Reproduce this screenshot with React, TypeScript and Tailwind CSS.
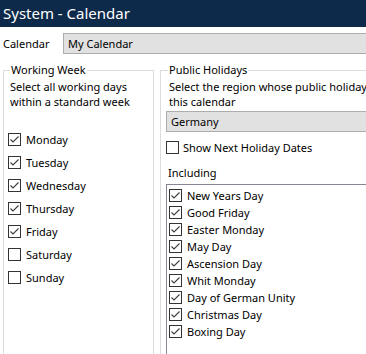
const weekDays = [
  { name: "Monday", checked: true },
  { name: "Tuesday", checked: true },
  { name: "Wednesday", checked: true },
  { name: "Thursday", checked: true },
  { name: "Friday", checked: true },
  { name: "Saturday", checked: false },
  { name: "Sunday", checked: false },
];

const holidays = [
  "New Years Day",
  "Good Friday",
  "Easter Monday",
  "May Day",
  "Ascension Day",
  "Whit Monday",
  "Day of German Unity",
  "Christmas Day",
  "Boxing Day",
];

const CheckBox = ({ checked }: { checked: boolean }) => (
  <span className="flex h-[13px] w-[13px] shrink-0 items-center justify-center border border-[#333333] bg-white">
    {checked && (
      <svg width="11" height="11" viewBox="0 0 11 11">
        <polyline points="1.5,5.5 4,8 9.5,2.5" fill="none" stroke="#3c3c3c" strokeWidth="1.1" />
      </svg>
    )}
  </span>
);

export default function App() {
  return (
    <div
      className="h-[354px] w-[366px] overflow-hidden bg-white text-[11px] leading-[15px] text-black"
      style={{ fontFamily: '"Noto Sans", "Open Sans", sans-serif' }}
    >
      <div className="flex h-[27px] items-center bg-[#0e2a4a] pl-[3px] text-[15px] text-white">
        System - Calendar
      </div>

      <div className="w-[440px]">
        <div className="mt-[6px] flex items-center">
          <span className="w-[63px] pl-[3px]">Calendar</span>
          <div className="flex h-[21px] flex-1 items-center border border-[#adadad] bg-[#e1e1e1] pl-[4px]">
            My Calendar
          </div>
        </div>

        <div className="mt-[8px] flex items-start gap-[6px] pl-[3px]">
          <fieldset className="h-[320px] w-[151px] shrink-0 border border-[#dcdcdc]">
            <legend className="ml-[6px] px-[1px] leading-[16px]">Working Week</legend>
            <p className="pl-[6px] pt-[1px]">
              Select all working days
              <br />
              within a standard week
            </p>
            <div className="mt-[24px] flex flex-col gap-[10px] pl-[4px]">
              {weekDays.map((day) => (
                <label key={day.name} className="flex h-[13px] items-center gap-[5px]">
                  <CheckBox checked={day.checked} />
                  <span>{day.name}</span>
                </label>
              ))}
            </div>
          </fieldset>

          <fieldset className="h-[320px] flex-1 border border-[#dcdcdc]">
            <legend className="ml-[7px] px-[1px] leading-[16px]">Public Holidays</legend>
            <p className="whitespace-nowrap pl-[8px] pt-[1px]">
              Select the region whose public holidays apply to
              <br />
              this calendar
            </p>
            <div className="ml-[5px] mt-[2px] flex h-[21px] items-center border border-[#adadad] bg-[#e1e1e1] pl-[4px]">
              Germany
            </div>
            <label className="ml-[5px] mt-[9px] flex h-[13px] items-center gap-[4px]">
              <CheckBox checked={false} />
              <span>Show Next Holiday Dates</span>
            </label>
            <div className="mt-[11px] pl-[7px]">Including</div>
            <div className="ml-[5px] mt-[4px] h-[200px] border border-[#828790] pl-[2px] pt-[4px]">
              <div className="flex flex-col gap-[4px]">
                {holidays.map((h) => (
                  <label key={h} className="flex h-[13px] items-center gap-[5px]">
                    <CheckBox checked />
                    <span>{h}</span>
                  </label>
                ))}
              </div>
            </div>
          </fieldset>
        </div>
      </div>
    </div>
  );
}
